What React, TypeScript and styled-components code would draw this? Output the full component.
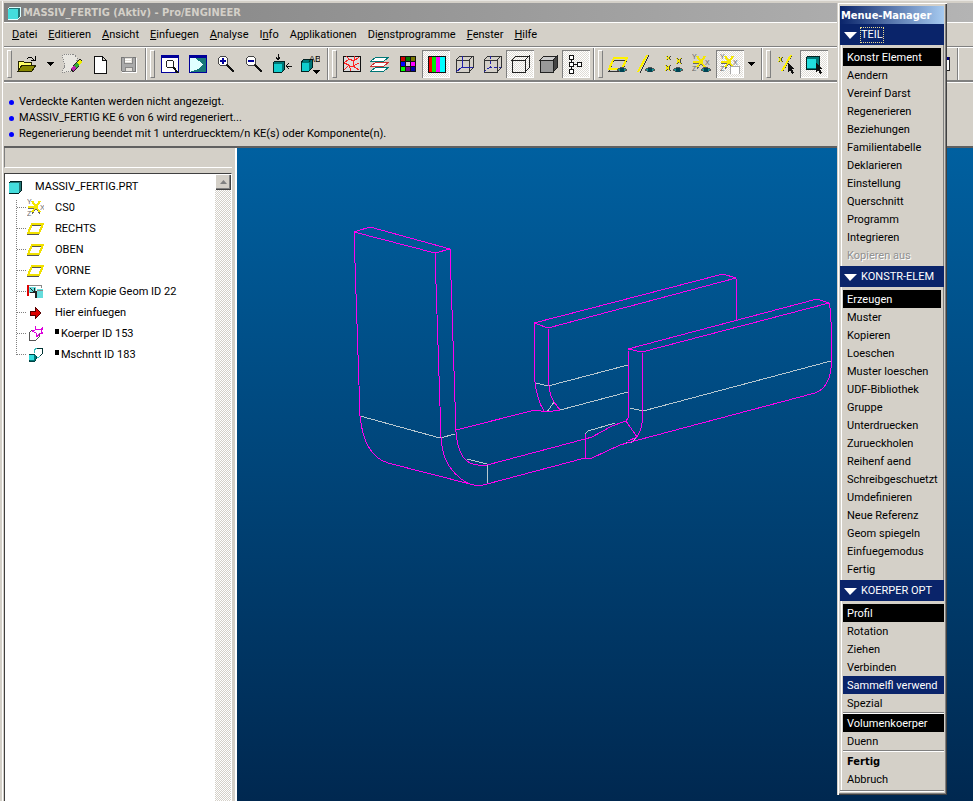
import React from "react";
import styled, { createGlobalStyle, css } from "styled-components";

const face = "#d4d0c8";
const navy = "#0a246a";

const Global = createGlobalStyle`
  * { box-sizing: border-box; }
  body { margin: 0; background: ${face}; font: 11px/16px Roboto, "Liberation Sans", sans-serif; color: #000; }
  button { font: inherit; color: inherit; background: none; border: 0; padding: 0; margin: 0; text-align: left; white-space: nowrap; }
  ul { list-style: none; margin: 0; padding: 0; }
  svg { display: block; flex: none; }
  svg text { font: 7px "Liberation Sans", sans-serif; stroke: none; }
`;

const Frame = styled.div`
  position: relative;
  display: flex;
  flex-direction: column;
  min-height: 100vh;
  padding: 2px 0 0 4px;
  overflow: hidden;
  border-top: 1px solid #e8e6e2;
  background: linear-gradient(90deg, ${face} 2px, #fff 2px, #fff 3px, ${face} 3px);
`;

const TitleBar = styled.header`
  display: flex;
  align-items: center;
  gap: 2px;
  height: 19px;
  padding-left: 3px;
  background: linear-gradient(90deg, #808080, #b4b4b4);
  color: ${face};
  font: bold 11px/19px "DejaVu Sans Condensed", "DejaVu Sans", sans-serif;
  white-space: nowrap;
`;

const MenuBar = styled.nav`
  display: flex;
  align-items: flex-end;
  gap: 11px;
  height: 25px;
  padding-left: 8px;
  border-top: 1px solid #fff;
  border-bottom: 1px solid #808080;
`;

const MenuButton = styled.button`
  line-height: 22px;
`;

const ToolBar = styled.div`
  display: flex;
  height: 35px;
  border-top: 1px solid #fff;
  border-bottom: 2px solid #808080;
`;

const ToolGroup = styled.div`
  position: relative;
  display: flex;
  flex: none;
  align-items: center;
  padding: 0 3px 0 9px;
  border-right: 1px solid #808080;
  box-shadow: inset -1px 0 ${face}, 1px 0 #fff;
  margin-right: 1px;
  &::before {
    content: "";
    position: absolute;
    left: 3px;
    top: 2px;
    bottom: 2px;
    width: 3px;
    border: 1px solid;
    border-color: #fff #808080 #808080 #fff;
  }
`;

const ToolButton = styled.button<{ $on?: boolean; $slim?: number }>`
  display: flex;
  flex: none;
  align-items: center;
  justify-content: center;
  width: ${(p) => p.$slim ?? 28}px;
  height: 28px;
  ${(p) =>
    p.$on &&
    css`
      background: repeating-conic-gradient(#fff 0 25%, #dedbd5 0 50%) 0 0 / 2px 2px;
      box-shadow: inset 1px 1px #808080, inset -1px -1px #fff;
    `}
`;

const Messages = styled.ul`
  height: 66px;
  padding: 11px 4px 0;
  border-top: 1px solid #fff;
  border-bottom: 2px solid #606060;
`;

const Message = styled.li`
  display: flex;
  align-items: center;
  gap: 5px;
  height: 16px;
  &::before {
    content: "";
    width: 5px;
    height: 5px;
    margin-left: 1px;
    border-radius: 50%;
    background: #00f;
  }
`;

const Work = styled.main`
  display: flex;
  flex: 1;
`;

const SidePane = styled.aside`
  display: flex;
  flex-direction: column;
  flex: none;
  width: 233px;
  border-right: 2px solid #fff;
  box-shadow: inset -2px 0 ${face};
  padding-right: 3px;
`;

const PaneHead = styled.div`
  height: 20px;
  margin-bottom: 5px;
  border-left: 1px solid #808080;
  border-bottom: 1px solid #fff;
`;

const TreeBox = styled.div`
  display: flex;
  flex: 1;
  border: 1px solid #404040;
  border-width: 1px 1px 0 1px;
  border-right-color: #fff;
  background: #fff;
`;

const Tree = styled.ul`
  flex: 1;
  padding: 2px 0 0 3px;
`;

const Root = styled.li`
  display: flex;
  align-items: center;
  gap: 13px;
  height: 21px;
`;

const Branch = styled.ul`
  background: repeating-linear-gradient(#808080 0 1px, transparent 1px 2px) 8px 3px / 1px 156px no-repeat;
`;

const Leaf = styled.li`
  display: flex;
  align-items: center;
  height: 21px;
  padding-left: 9px;
  &::before {
    content: "";
    width: 10px;
    height: 1px;
    background: repeating-linear-gradient(90deg, #808080 0 1px, transparent 1px 2px);
  }
`;

const LeafText = styled.span<{ $mark?: boolean }>`
  display: flex;
  align-items: center;
  margin-left: 11px;
  white-space: nowrap;
  ${(p) =>
    p.$mark &&
    css`
      &::before {
        content: "";
        width: 4px;
        height: 5px;
        margin: 0 2px 5px 0;
        background: #000;
      }
    `}
`;

const ScrollTrack = styled.div`
  width: 16px;
  background: repeating-conic-gradient(#fff 0 25%, ${face} 0 50%) 0 0 / 2px 2px;
`;

const ScrollButton = styled.button`
  display: grid;
  place-items: center;
  width: 16px;
  height: 16px;
  background: ${face};
  box-shadow: inset 1px 1px #fff, inset -1px -1px #404040, inset -2px -2px #808080;
`;

const Canvas = styled.section`
  flex: 1;
  min-width: 0;
  overflow: hidden;
  background: linear-gradient(#0060a0, #002850);
`;

const Manager = styled.aside`
  position: absolute;
  top: 1px;
  right: 26px;
  width: 110px;
  padding: 4px 3px 3px 3px;
  background: ${face};
  box-shadow: inset 1px 1px ${face}, inset 2px 2px #fff, inset -1px -1px #404040, inset -2px -2px #808080;
`;

const ManagerTitle = styled.h2`
  height: 18px;
  margin: 0;
  padding: 1px 0 0 1px;
  background: linear-gradient(90deg, ${navy}, #a6caf0);
  color: #fff;
  font: bold 11px/18px "DejaVu Sans Condensed", "DejaVu Sans", sans-serif;
  white-space: nowrap;
`;

const SectionHead = styled.button`
  display: flex;
  align-items: center;
  gap: 4px;
  width: 100%;
  height: 21px;
  padding: 1px 0 0 4px;
  background: ${navy};
  color: #fff;
`;

const SectionName = styled.span<{ $focus?: boolean }>`
  line-height: 14px;
  outline: ${(p) => (p.$focus ? "1px dotted #e8d890" : "0")};
`;

const SectionBody = styled.div<{ $raised?: boolean }>`
  padding: 3px 0 2px 1px;
  margin-left: 1px;
  border-left: 1px solid #fff;
  ${(p) =>
    p.$raised &&
    css`
      padding-right: 2px;
      border-right: 1px solid #808080;
    `}
`;

const Item = styled.button<{ $tone?: string }>`
  display: block;
  width: 100%;
  height: 18px;
  padding: 2px 0 0 4px;
  line-height: 16px;
  ${(p) => p.$tone && css`background: ${p.$tone}; color: #fff;`}
  &:disabled { color: #909090; text-shadow: 1px 1px #fff; }
`;

const FinalItem = styled(Item)`
  font: bold 11px/16px "DejaVu Sans Condensed", "DejaVu Sans", sans-serif;
`;

const Rule = styled.hr`
  height: 2px;
  margin: 0;
  border: 0;
  background: linear-gradient(#808080 50%, #fff 50%);
`;

const menus: [string, number][] = [
  ["Datei", 0], ["Editieren", 0], ["Ansicht", 0], ["Einfuegen", 0], ["Analyse", 0],
  ["Info", 1], ["Applikationen", 1], ["Dienstprogramme", 2], ["Fenster", 0], ["Hilfe", 0],
];

const Eye = () => (
  <>
    <path d="M9 16q5-5 10 0q-5 4-10 0z" fill="#199" stroke="#555" />
    <rect x="12" y="14" width="4" height="4" fill="#045" />
  </>
);

const Axes = () => (
  <>
    <path d="M1 9H9M5 3L9 9L13 3M9 9L13 15M9 9L5 15" stroke="#666" fill="none" />
    <path d="M1 8H9M5 2L9 8L13 2M9 8L13 13M9 8L5 13" stroke="#f6e800" strokeWidth="2" fill="none" />
    <g fill="#666">
      <text x="0" y="5">Y</text>
      <text x="13" y="11">X</text>
      <text x="0" y="17">Z</text>
    </g>
  </>
);

const Pointer = () => <path d="M12 9v9l2-2 2 4 2-1-2-4h3z" fill="#111" />;

const Cube = ({ fill = "none", side = "none" }: { fill?: string; side?: string }) => (
  <>
    <path d="M2 6l4-4h13l-4 4z" fill={fill === "none" ? "none" : "#ccc"} stroke="#222" />
    <path d="M15 6l4-4v12l-4 4z" fill={side} stroke="#222" />
    <rect x="2" y="6" width="13" height="12" fill={fill} stroke="#222" />
  </>
);

const WireCube = ({ dash }: { dash?: string }) => (
  <>
    <path d="M2 6h13v12H2zM2 6l4-4M15 6l4-4M15 18l4-4M6 2h13v12" fill="none" stroke="#333" />
    <path d="M8 2v11h11M8 13l-6 5" stroke="#22a" strokeDasharray={dash} fill="none" />
  </>
);

const art: Record<string, React.ReactNode> = {
  open: (
    <>
      <path d="M1 17V7h5l1 1h7v3" fill="#ff6" stroke="#220" />
      <path d="M1 17l4-6h14l-4 6z" fill="#880" stroke="#220" />
      <path d="M10 5q4-4 7 1M18 2v4h-4" fill="none" stroke="#000" />
    </>
  ),
  repaint: (
    <>
      <path d="M0 2l4-2h7l5 4-5 13-7 1H0l3-6z" fill="#e8e6e0" stroke="#888" strokeDasharray="1 1" />
      <path d="M18 5l2 3-9 10-2-3z" fill="#111" stroke="#222" />
      <path d="M18 5l2 3-3 3-2-3z" fill="#ee0" />
      <path d="M15 8l2 3-3 3-2-3z" fill="#3a3" />
      <path d="M12 11l2 3-3 3-2-2z" fill="#b2a" />
    </>
  ),
  page: <path d="M4 2h8l4 4v13H4zM12 2v4h4" fill="#fff" stroke="#111" />,
  save: (
    <>
      <path d="M3 3h14v14H4l-1-1z" fill="#aaa" stroke="#777" />
      <path d="M6 3h8v6H6zM7 13h7v4H7z" fill="#e4e1db" stroke="#888" />
      <path d="M7 5h6M7 7h6M4 18h14V4" stroke="#fff" fill="none" />
    </>
  ),
  fit: (
    <>
      <path d="M1 1h17v17H1z" fill="#fff" stroke="#009" />
      <path d="M1 1h17v3H1z" fill="#009" />
      <circle cx="10" cy="10" r="4" fill="#fff" stroke="#222" />
      <path d="M13 13l5 6" stroke="#111" strokeWidth="2" />
    </>
  ),
  orient: (
    <>
      <path d="M1 1h17v17H1z" fill="#187878" stroke="#009" />
      <path d="M1 1h17v3H1z" fill="#009" />
      <path d="M2 4h5l8 6-5 5-8 3z" fill="#e0ffff" />
    </>
  ),
  plus: (
    <>
      <circle cx="7" cy="7" r="5" fill="#fff" stroke="#444" />
      <path d="M11 11l7 7" stroke="#111" strokeWidth="2" />
      <path d="M4 7h6M7 4v6" stroke="#009" strokeWidth="2" />
    </>
  ),
  minus: (
    <>
      <circle cx="7" cy="7" r="5" fill="#fff" stroke="#444" />
      <path d="M11 11l7 7" stroke="#111" strokeWidth="2" />
      <path d="M4 7h6" stroke="#009" strokeWidth="2" />
    </>
  ),
  refit: (
    <>
      <path d="M1 9l2-2h9v9l-2 2H1z" fill="#077" stroke="#022" />
      <path d="M2 10h8v8H2z" fill="#1cc" />
      <path d="M6 0v6M4 3l2 3 2-3M20 12h-6M17 9l-3 3 3 3" fill="none" stroke="#111" />
    </>
  ),
  views: (
    <>
      <path d="M1 9l3-4h8v9l-3 3H1z" fill="#077" stroke="#022" />
      <path d="M2 9h7v8H2z" fill="#1cc" />
      <text x="9" y="8" style={{ fontSize: 9 }}>AB</text>
      <path d="M12 16h8l-4 4z" fill="#000" />
    </>
  ),
  repair: (
    <>
      <path d="M1 2h17v15H1z" fill="#ddd" stroke="#111" />
      <path d="M2 16l5-5-5-2 5-4-3-3M7 5l5 2 5-4M12 2v5l-1 5H7M11 12l6 4M11 12l6-3M7 11l2 6" fill="none" stroke="#f22" />
    </>
  ),
  layers: (
    <>
      <path d="M1 17l5-4h13l-5 4z" fill="#fff" stroke="#077" />
      <path d="M1 12l5-4h13l-5 4z" fill="#fff" stroke="#c33" />
      <path d="M1 7l5-4h13l-5 4z" fill="#fff" stroke="#077" />
    </>
  ),
  palette: (
    <>
      <path d="M2 2h16v16H2z" fill="#111" />
      {["#c00", "#070", "#770", "#00f", "#ccc", "#f0f", "#0f0", "#708", "#00a"].map((c, i) => (
        <rect key={c} x={3 + (i % 3) * 5} y={3 + Math.floor(i / 3) * 5} width="4" height="4" fill={c} />
      ))}
    </>
  ),
  stripes: (
    <>
      {["#f00", "#0e0", "#f0f", "#0ff"].map((c, i) => (
        <rect key={c} x={2 + i * 4} y="2" width="5" height="16" fill={c} />
      ))}
      <path d="M2 2h17v16H2z" fill="none" stroke="#111" />
    </>
  ),
  wire: <WireCube />,
  hidden: <WireCube dash="3 2" />,
  nohidden: <Cube />,
  shaded: <Cube fill="#999" side="#444" />,
  nodes: (
    <path d="M3 1h4v4H3zM3 8h4v4H3zM11 8h4v4h-4zM3 15h4v4H3zM5 5v3M5 12v3M7 10h4" fill="#fff" stroke="#111" />
  ),
  planes: (
    <>
      <path d="M1 15L6 4h13l-5 11z" stroke="#333" fill="none" transform="translate(0 2)" />
      <path d="M1 15L6 4h13l-5 11z" stroke="#fff200" strokeWidth="2" fill="none" />
      <Eye />
    </>
  ),
  lines: (
    <>
      <path d="M4 19L13 1" stroke="#333" />
      <path d="M2 18L11 1" stroke="#fff200" strokeWidth="2" />
      <Eye />
    </>
  ),
  points: (
    <>
      <path d="M2 2l4 4m0-4l-4 4M12 4l5 6m0-6l-5 6M1 11l5 6m0-6l-5 6" stroke="#444" transform="translate(1 0)" />
      <path d="M2 2l4 4m0-4l-4 4M12 4l5 6m0-6l-5 6M1 11l5 6m0-6l-5 6" stroke="#f6e800" />
      <Eye />
    </>
  ),
  csys: (
    <>
      <Axes />
      <Eye />
    </>
  ),
  csysTag: (
    <>
      <Axes />
      <path d="M10 12h9v8h-9z" fill="#fff" stroke="#aaa" />
    </>
  ),
  pick: (
    <>
      <path d="M2 3l4 5m0-5L2 8M15 1L6 17" stroke="#444" transform="translate(1 0)" />
      <path d="M2 3l4 5m0-5L2 8" stroke="#ee0" />
      <path d="M15 1L6 17" stroke="#fff200" strokeWidth="2" />
      <Pointer />
    </>
  ),
  pickSolid: (
    <>
      <path d="M2 4l2-2h11v10l-3 3H2z" fill="#077" stroke="#022" />
      <path d="M3 5h9v9H3z" fill="#2dd" />
      <Pointer />
    </>
  ),
  other: <path d="M5 7l4-4 5 4-2 6-6 1z" fill="#f0f" stroke="#606" />,
  window: (
    <>
      <path d="M3 3h16v13H3z" fill="#fff" stroke="#222" />
      <path d="M3 3h16v3H3z" fill="#007" />
    </>
  ),
  drop: <path d="M6 8h8l-4 4z" fill="#000" />,
};

const Icon = ({ name }: { name: string }) => (
  <svg width="20" height="20" viewBox="0 0 20 20" shapeRendering="crispEdges" aria-hidden="true">
    {art[name]}
  </svg>
);

type Tool = { icon: string; label: string; on?: boolean; slim?: number };
const groups: Tool[][] = [
  [
    { icon: "open", label: "Oeffnen" },
    { icon: "drop", label: "Zuletzt geoeffnet", slim: 17 },
    { icon: "repaint", label: "Bildaufbau" },
    { icon: "page", label: "Neu" },
    { icon: "save", label: "Speichern" },
  ],
  [
    { icon: "fit", label: "Einpassen" },
    { icon: "orient", label: "Orientieren" },
    { icon: "plus", label: "Vergroessern" },
    { icon: "minus", label: "Verkleinern" },
    { icon: "refit", label: "Neu einpassen" },
    { icon: "views", label: "Ansichten" },
  ],
  [
    { icon: "repair", label: "Netz" },
    { icon: "layers", label: "Folien" },
    { icon: "palette", label: "Farben" },
    { icon: "stripes", label: "Farbverlauf", on: true },
    { icon: "wire", label: "Drahtmodell" },
    { icon: "hidden", label: "Verdeckte Kanten" },
    { icon: "nohidden", label: "Ohne verdeckte Kanten", on: true },
    { icon: "shaded", label: "Schattiert" },
    { icon: "nodes", label: "Modellbaum", on: true },
  ],
  [
    { icon: "planes", label: "Ebenen" },
    { icon: "lines", label: "Achsen" },
    { icon: "points", label: "Punkte" },
    { icon: "csys", label: "Koordinatensysteme" },
    { icon: "csysTag", label: "Namen", on: true },
    { icon: "drop", label: "Mehr Bezuege", slim: 14 },
  ],
  [
    { icon: "pick", label: "Bezug waehlen" },
    { icon: "pickSolid", label: "Geometrie waehlen", on: true },
    { icon: "other", label: "KE waehlen" },
    { icon: "planes", label: "Flaeche waehlen" },
    { icon: "lines", label: "Kante waehlen" },
    { icon: "drop", label: "Mehr Filter", slim: 14 },
    { icon: "window", label: "Fenster" },
  ],
];

const treeArt: Record<string, React.ReactNode> = {
  csys: <Axes />,
  plane: (
    <>
      <path d="M1 13L5 4h11l-4 9z" stroke="#555" fill="none" transform="translate(0 1)" />
      <path d="M1 13L5 4h11l-4 9z" stroke="#f0e000" strokeWidth="2" fill="none" />
    </>
  ),
  copy: (
    <>
      <path d="M1 2h13v3" fill="none" stroke="#888" />
      <path d="M1 2v11" stroke="#d00" strokeWidth="2" />
      <path d="M2 4h7v6H2zM10 6h6v9h-6z" fill="#6dd" />
      <path d="M3 5l4 4M7 5v4H3" stroke="#222" fill="none" />
      <path d="M8 8h2v7H8z" fill="#222" />
      <path d="M10 7h6" stroke="#888" />
    </>
  ),
  arrow: <path d="M3 7h5V3l6 6-6 6v-4H3z" fill="#d00" stroke="#500" />,
  body: (
    <>
      <path d="M2 15V8l3-3h7v7l-3 3z" fill="#fff" stroke="#555" />
      <path d="M8 1l1 3h5l2-2-2 5 2 1-4 1-2 3-1-4-4-2 3-1z" fill="#fff" stroke="#d0d" />
    </>
  ),
  cut: (
    <>
      <path d="M2 9l2-1h5v5l-1 2H2z" fill="#077" stroke="#044" />
      <path d="M2 9h5v5H2z" fill="#3dd" />
      <path d="M7 7V4l3-2h5v6l-3 3h-2" fill="#fff" stroke="#3bb" />
      <path d="M10 2h5v6l-2 2" fill="none" stroke="#033" />
    </>
  ),
};

const leaves: { icon: string; text: string; mark?: boolean }[] = [
  { icon: "csys", text: "CS0" },
  { icon: "plane", text: "RECHTS" },
  { icon: "plane", text: "OBEN" },
  { icon: "plane", text: "VORNE" },
  { icon: "copy", text: "Extern Kopie Geom ID 22" },
  { icon: "arrow", text: "Hier einfuegen" },
  { icon: "body", text: "Koerper ID 153", mark: true },
  { icon: "cut", text: "Mschntt ID 183", mark: true },
];

const PartIcon = ({ light }: { light?: boolean }) => (
  <svg width="14" height="14" viewBox="0 0 14 14" shapeRendering="crispEdges" aria-hidden="true">
    <path d="M1 3l2-2h10v10l-2 2H1z" fill="#277" stroke={light ? "#dff" : "#022"} />
    <path d="M1 3h10v10H1z" fill="#4dd" />
  </svg>
);

const Triangle = () => (
  <svg width="13" height="7" viewBox="0 0 13 7" aria-hidden="true">
    <path d="M0 0h13L6 7z" fill="#fff" />
  </svg>
);

const teil = ["Konstr Element", "Aendern", "Vereinf Darst", "Regenerieren", "Beziehungen", "Familientabelle", "Deklarieren", "Einstellung", "Querschnitt", "Programm", "Integrieren", "Kopieren aus"];
const konstr = ["Erzeugen", "Muster", "Kopieren", "Loeschen", "Muster loeschen", "UDF-Bibliothek", "Gruppe", "Unterdruecken", "Zurueckholen", "Reihenf aend", "Schreibgeschuetzt", "Umdefinieren", "Neue Referenz", "Geom spiegeln", "Einfuegemodus", "Fertig"];
const koerper = ["Profil", "Rotation", "Ziehen", "Verbinden", "Sammelfl verwend", "Spezial"];

const Section = ({ name, focus, raised, children }: { name: string; focus?: boolean; raised?: boolean; children: React.ReactNode }) => (
  <section>
    <SectionHead>
      <Triangle />
      <SectionName $focus={focus}>{name}</SectionName>
    </SectionHead>
    <SectionBody $raised={raised}>{children}</SectionBody>
  </section>
);

const Model = () => (
  <svg width="600" height="360" viewBox="237 148 600 360" fill="none" shapeRendering="crispEdges" role="img" aria-label="MASSIV_FERTIG">
    <g stroke="#b8c8d0">
      <path d="M360 416L440 438L455 434M467 459L487 464V484" />
      <path d="M536 383L548 386L628 365M547 412L554 402M560 410L628 392" />
      <path d="M630 408L643 411L831 361M585 439V434L588 431L615 423M626 442L632 442L637 437" />
    </g>
    <g stroke="#f0e">
      <path d="M354 232L370 227L450 249L435 253Z" />
      <path d="M354 232L360 416Q362 435 368 446Q375 459 388 463L470 484" />
      <path d="M435 253L441 437Q442 455 449 466Q459 480 470 484Q478 487 487 484L585 458" />
      <path d="M450 249L456 432Q457 447 463 457Q470 467 487 465L585 439" />
      <path d="M456 430L535 410L547 412L560 410" />
      <path d="M534 323L723 274L736 278L548 328Z" />
      <path d="M736 278L737 320M534 323L535 382Q537 400 544 411M548 328L549 386Q550 396 554 402L560 410" />
      <path d="M628 349L817 299L829 303L642 352Z" />
      <path d="M829 303Q831 310 831 322V368Q829 388 815 393L638 440" />
      <path d="M628 349L629 417L626 421L637 437M642 352L643 412Q643 428 637 437L628 441" />
      <path d="M585 434V458H592L620 445L638 440M585 439L592 437L612 426L626 421" />
    </g>
  </svg>
);

export default function App() {
  return (
    <Frame>
      <Global />
      <TitleBar>
        <PartIcon light />
        MASSIV_FERTIG (Aktiv) - Pro/ENGINEER
      </TitleBar>
      <MenuBar>
        {menus.map(([text, at]) => (
          <MenuButton key={text}>
            {text.slice(0, at)}
            <u>{text[at]}</u>
            {text.slice(at + 1)}
          </MenuButton>
        ))}
      </MenuBar>
      <ToolBar>
        {groups.map((tools, i) => (
          <ToolGroup key={i}>
            {tools.map((t) => (
              <ToolButton key={t.label} $on={t.on} $slim={t.slim} aria-label={t.label} aria-pressed={t.on}>
                <Icon name={t.icon} />
              </ToolButton>
            ))}
          </ToolGroup>
        ))}
      </ToolBar>
      <Messages>
        <Message>Verdeckte Kanten werden nicht angezeigt.</Message>
        <Message>MASSIV_FERTIG KE 6 von 6 wird regeneriert...</Message>
        <Message>Regenerierung beendet mit 1 unterdruecktem/n KE(s) oder Komponente(n).</Message>
      </Messages>
      <Work>
        <SidePane>
          <PaneHead />
          <TreeBox>
            <Tree>
              <Root>
                <PartIcon />
                MASSIV_FERTIG.PRT
              </Root>
              <li>
                <Branch>
                  {leaves.map((leaf) => (
                    <Leaf key={leaf.text}>
                      <svg width="17" height="17" viewBox="0 0 17 17" shapeRendering="crispEdges" aria-hidden="true">
                        {treeArt[leaf.icon]}
                      </svg>
                      <LeafText $mark={leaf.mark}>{leaf.text}</LeafText>
                    </Leaf>
                  ))}
                </Branch>
              </li>
            </Tree>
            <ScrollTrack>
              <ScrollButton aria-label="Nach oben">
                <svg width="7" height="4" viewBox="0 0 7 4" aria-hidden="true">
                  <path d="M0 4L3.5 0L7 4z" fill="#808080" />
                </svg>
              </ScrollButton>
            </ScrollTrack>
          </TreeBox>
        </SidePane>
        <Canvas>
          <Model />
        </Canvas>
      </Work>
      <Manager>
        <ManagerTitle>Menue-Manager</ManagerTitle>
        <Section name="TEIL" focus raised>
          {teil.map((t, i) => (
            <Item key={t} $tone={i === 0 ? "#000" : undefined} disabled={t === "Kopieren aus"}>
              {t}
            </Item>
          ))}
        </Section>
        <Section name="KONSTR-ELEM" raised>
          {konstr.map((t, i) => (
            <Item key={t} $tone={i === 0 ? "#000" : undefined}>
              {t}
            </Item>
          ))}
        </Section>
        <Section name="KOERPER OPT">
          {koerper.map((t, i) => (
            <Item key={t} $tone={i === 0 ? "#000" : i === 4 ? navy : undefined}>
              {t}
            </Item>
          ))}
          <Rule />
          <Item $tone="#000">Volumenkoerper</Item>
          <Item>Duenn</Item>
          <Rule />
          <FinalItem>Fertig</FinalItem>
          <Item>Abbruch</Item>
        </Section>
        <Rule />
      </Manager>
    </Frame>
  );
}
